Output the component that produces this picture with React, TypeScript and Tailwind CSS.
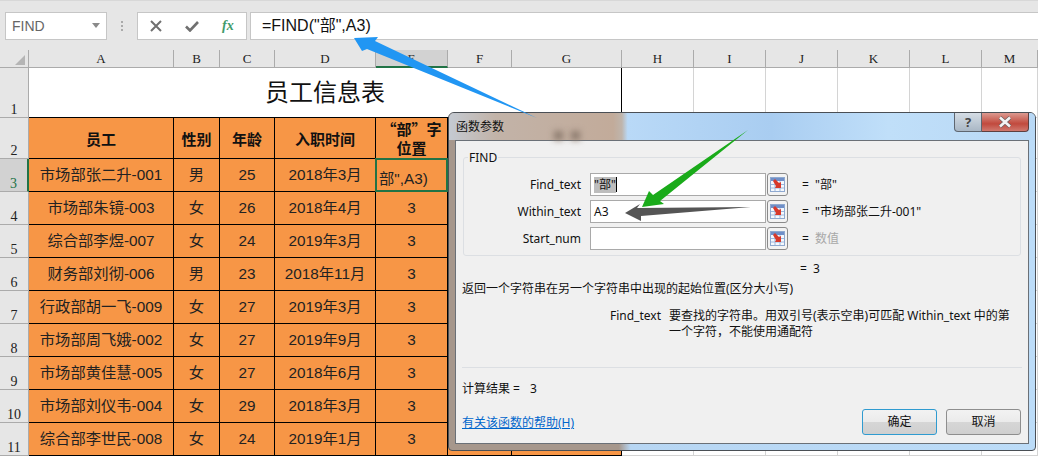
import React from "react";

const SANS = { fontFamily: '"Liberation Sans","Noto Sans CJK SC",sans-serif' };
const CJK = { fontFamily: '"Noto Sans CJK SC","Liberation Sans",sans-serif' };
const UI = { fontFamily: '"Noto Sans","Noto Sans CJK SC",sans-serif' };
const SERIF = { fontFamily: '"Liberation Serif","Noto Sans CJK SC",serif' };

const rows: [string, string, string, string][] = [
  ["市场部朱镜-003", "女", "26", "2018年4月"],
  ["综合部李煜-007", "女", "24", "2019年3月"],
  ["财务部刘彻-006", "男", "23", "2018年11月"],
  ["行政部胡一飞-009", "女", "27", "2019年3月"],
  ["市场部周飞娥-002", "女", "27", "2019年9月"],
  ["市场部黄佳慧-005", "女", "27", "2018年6月"],
  ["市场部刘仪韦-004", "女", "29", "2018年3月"],
  ["综合部李世民-008", "女", "24", "2019年1月"],
];

function ColHead({ label, active }: { label: string; active?: boolean }) {
  return (
    <div
      className={
        active
          ? "flex items-center justify-center border-b-2 border-b-[#217346] border-r border-r-[#ababab] bg-[#d2d2d2] text-[13px] leading-none text-[#333]"
          : "flex items-center justify-center border-b border-b-[#ababab] border-r border-r-[#ababab] bg-[#e6e6e6] text-[13px] leading-none text-[#222]"
      }
      style={SERIF}
    >
      {label}
    </div>
  );
}

function RowHead({ n, active }: { n: number; active?: boolean }) {
  return (
    <div
      className={
        active
          ? "flex items-end justify-center border-b border-b-[#ababab] border-r-2 border-r-[#217346] bg-[#d2d2d2] text-[14px] leading-[15px] text-[#217346]"
          : "flex items-end justify-center border-b border-b-[#ababab] border-r border-r-[#ababab] bg-[#e6e6e6] text-[14px] leading-[15px] text-[#222]"
      }
      style={SERIF}
    >
      {n}
    </div>
  );
}

function Cell({ children }: { children?: React.ReactNode }) {
  return (
    <div className="flex items-center justify-center border-b border-r border-black bg-[#f79646] text-[15.3px] text-[#222]" style={SANS}>
      {children}
    </div>
  );
}

function HeadCell({ children }: { children?: React.ReactNode }) {
  return (
    <div className="flex items-center justify-center border-b border-r border-black bg-[#f79646] text-center text-[15px] font-bold leading-[19px] text-[#111]" style={CJK}>
      <div>{children}</div>
    </div>
  );
}

function Blank() {
  return <div className="border-b border-r border-[#d4d4d4] bg-white" />;
}

function RefIcon() {
  return (
    <div className="flex h-[23px] w-[21px] shrink-0 items-center justify-center rounded-[3px] border border-[#8a8a8a] bg-[#f3f3f3]">
      <svg width="15" height="15" viewBox="0 0 15 15">
        <rect x="0.5" y="0.5" width="14" height="14" fill="#f4f8fd" stroke="#8fa9d0" />
        <rect x="1" y="1" width="13" height="3" fill="#6f8fc8" />
        <path d="M1 7.5H14M1 11H14M5 4V14M10 4V14" stroke="#9db8dd" fill="none" />
        <polygon points="3,4 5,2 9,6 11,5 11,11 5,11 6,9" fill="#d8392b" />
      </svg>
    </div>
  );
}

function ArgRow({ label, children, value, muted }: { label: string; children?: React.ReactNode; value: string; muted?: boolean }) {
  return (
    <div className="flex h-[23px] items-center">
      <div className="w-[117px] shrink-0 text-right">{label}</div>
      <div className="ml-[9px] flex h-[23px] w-[176px] shrink-0 items-center border border-[#a9a9a9] bg-white pl-[3px]">{children}</div>
      <div className="ml-px"><RefIcon /></div>
      <div className="ml-[14px] w-[13px] shrink-0">=</div>
      <div className={muted ? "text-[#a8a8a8]" : ""}>{value}</div>
    </div>
  );
}

function Dialog() {
  return (
    <div
      className="absolute left-[448px] top-[112px] h-[339px] w-[588px] rounded-t-[6px] rounded-b-[4px] border border-[#4a4f55] bg-[linear-gradient(90deg,#a6978c_0%,#a6978c_29%,#b7d6f3_31%,#bcdcf8_100%)] text-[12px] leading-[16px] text-[#111]"
      style={UI}
    >
      <div className="relative h-[27px] rounded-t-[5px] bg-[linear-gradient(90deg,#c4cad2_0%,#c2b3a8_8%,#c2ab9a_28%,#bfb5ac_29.5%,#b9d9f7_30.5%,#a9cdf1_55%,#c0dff9_75%,#b8d8f5_100%)]">
        <div className="absolute left-[7px] top-[6px] text-[12px] leading-[16px]">函数参数</div>
        <div className="absolute left-[105px] top-[18px] h-[9px] w-[9px] bg-[#8c7b6e] blur-[3px]" />
        <div className="absolute left-[122px] top-[18px] h-[9px] w-[9px] bg-[#8c7b6e] blur-[3px]" />
        <div className="absolute left-[505px] top-0 flex h-[19px]">
          <div className="flex w-[28px] items-center justify-center rounded-bl-[4px] border border-t-0 border-[#5e6670] bg-[linear-gradient(180deg,#d5dde5,#a9b7c5)] text-[13px] font-bold leading-none text-[#444]">?</div>
          <div className="flex w-[47px] items-center justify-center rounded-br-[4px] border border-l-0 border-t-0 border-[#5e3f3f] bg-[linear-gradient(180deg,#dc9a90,#c6564a_50%,#c14a3e_60%,#d0796e)]">
            <svg width="16" height="12" viewBox="0 0 16 12"><path d="M3 1.5L13 10.5M13 1.5L3 10.5" stroke="#6b5f5f" strokeWidth="4" /><path d="M3 1.5L13 10.5M13 1.5L3 10.5" stroke="#f4f4f4" strokeWidth="2.6" /></svg>
          </div>
        </div>
      </div>
      <div className="mx-[6px] h-[304px] border border-[#6a7077] bg-[#f0f0f0] pl-[6px] pr-2 pt-4">
        <div className="relative ml-px w-[558px] rounded-[3px] border border-[#dcdfe3] pb-[5px] pt-[15px]">
          <div className="absolute left-[4px] top-[-8px] bg-[#f0f0f0] px-px">FIND</div>
          <div className="flex flex-col gap-[4px]">
            <ArgRow label="Find_text" value={'"部"'}>
              <span className="bg-[#bdbdbd]">"部"</span>
              <span className="h-[15px] w-px bg-black" />
            </ArgRow>
            <ArgRow label="Within_text" value={'"市场部张二升-001"'}>A3</ArgRow>
            <ArgRow label="Start_num" value="数值" muted />
          </div>
        </div>
        <div className="ml-[338px] mt-[5px] flex h-4">
          <div className="w-[13px]">=</div>
          <div>3</div>
        </div>
        <div className="mt-[4px]">返回一个字符串在另一个字符串中出现的起始位置(区分大小写)</div>
        <div className="mt-[11px] flex">
          <div className="ml-[148px] w-[59px] shrink-0">Find_text</div>
          <div className="w-[346px]">
            要查找的字符串。用双引号(表示空串)可匹配 Within_text 中的第一个字符，不能使用通配符
          </div>
        </div>
        <div className="mt-[27px] h-px w-[560px] bg-[#dcdfe3]" />
        <div className="mt-[13px] flex">
          <span>计算结果 =</span>
          <span className="ml-[10px]">3</span>
        </div>
        <div className="mr-[-1px] mt-[12px] flex items-start justify-between">
          <a className="mt-[6px] text-[#0066cc] underline">有关该函数的帮助(H)</a>
          <div className="flex gap-[9px]">
            <div className="flex h-[26px] w-[75px] items-center justify-center rounded-[3px] border border-[#2f9bd0] bg-[linear-gradient(180deg,#f2f2f2_0%,#ebebeb_48%,#d6d6d6_52%,#cfcfcf_100%)]">确定</div>
            <div className="flex h-[26px] w-[75px] items-center justify-center rounded-[3px] border border-[#8e8e8e] bg-[linear-gradient(180deg,#f2f2f2_0%,#ebebeb_48%,#d6d6d6_52%,#cfcfcf_100%)]">取消</div>
          </div>
        </div>
      </div>
    </div>
  );
}

export default function App() {
  return (
    <div className="relative h-[456px] w-[1038px] overflow-hidden bg-[#e6e6e6]">
      {/* formula bar */}
      <div className="h-[50px] border-t border-[#d8d8d8] bg-[#e6e6e6] pl-[5px] pt-[11px]">
        <div className="flex h-[28px] items-stretch">
          <div className="flex w-[102px] items-center justify-between border border-[#c6c6c6] bg-white pl-[6px] pr-[5px] text-[14px] text-[#666]" style={SANS}>
            FIND
            <svg width="10" height="6" viewBox="0 0 10 6"><path d="M1 0H9L5 5Z" fill="#8a8a8a" /></svg>
          </div>
          <div className="flex w-[30px] flex-col items-center justify-center gap-[2px]">
            <span className="h-[2px] w-[2px] bg-[#aaa]" />
            <span className="h-[2px] w-[2px] bg-[#aaa]" />
            <span className="h-[2px] w-[2px] bg-[#aaa]" />
          </div>
          <div className="flex w-[110px] items-center border border-[#c6c6c6] bg-white">
            <svg className="ml-[12px]" width="12" height="12" viewBox="0 0 12 12"><path d="M1 1L11 11M11 1L1 11" stroke="#707070" strokeWidth="2" /></svg>
            <svg className="ml-[23px]" width="14" height="12" viewBox="0 0 14 12"><path d="M1 6.5L5 10.5L13 2" stroke="#707070" strokeWidth="2.6" fill="none" /></svg>
            <span className="ml-[23px] text-[14px] font-bold italic leading-none text-[#3f9b6b]" style={SERIF}>fx</span>
          </div>
          <div className="ml-[3px] flex flex-1 items-center border border-r-0 border-[#c6c6c6] bg-white pl-[11px] text-[16px] text-[#111]" style={SANS}>
            =FIND("部",A3)
          </div>
        </div>
      </div>

      {/* sheet */}
      <div className="grid grid-cols-[29px_145px_46px_55px_101px_72px_64px_110px_72px_72px_72px_72px_72px_56px] grid-rows-[18px_50px_41px_33px_33px_33px_33px_33px_33px_33px_33px_33px]">
        <div className="relative border-b border-r border-[#ababab] bg-[#e6e6e6]">
          <svg className="absolute left-[15px] top-[5px]" width="11" height="11" viewBox="0 0 11 11"><path d="M10 0V10H0Z" fill="#b5b5b5" /></svg>
        </div>
        {["A", "B", "C", "D"].map((c) => <ColHead key={c} label={c} />)}
        <ColHead label="E" active />
        {["F", "G", "H", "I", "J", "K", "L", "M"].map((c) => <ColHead key={c} label={c} />)}

        <RowHead n={1} />
        <div className="col-span-7 flex items-center justify-center border-b border-r border-b-black border-r-black bg-white text-[24px] text-[#111]" style={SANS}>员工信息表</div>
        {[0, 1, 2, 3, 4, 5].map((i) => <Blank key={i} />)}

        <RowHead n={2} />
        <HeadCell>员工</HeadCell>
        <HeadCell>性别</HeadCell>
        <HeadCell>年龄</HeadCell>
        <HeadCell>入职时间</HeadCell>
        <HeadCell>“部”字<br />位置</HeadCell>
        <Cell />
        <Cell />
        {[0, 1, 2, 3, 4, 5].map((i) => <Blank key={i} />)}

        <RowHead n={3} active />
        <Cell>市场部张二升-001</Cell>
        <Cell>男</Cell>
        <Cell>25</Cell>
        <Cell>2018年3月</Cell>
        <div className="relative -ml-px -mt-px flex items-end overflow-hidden border-2 border-[#217346] bg-[#f79646] pb-px pl-[2px] text-[15.3px] leading-[20px] text-[#222]" style={SANS}>
          部",A3)
        </div>
        <Cell />
        <Cell />
        {[0, 1, 2, 3, 4, 5].map((i) => <Blank key={i} />)}

        {rows.map((r, i) => (
          <React.Fragment key={r[0]}>
            <RowHead n={i + 4} />
            <Cell>{r[0]}</Cell>
            <Cell>{r[1]}</Cell>
            <Cell>{r[2]}</Cell>
            <Cell>{r[3]}</Cell>
            <Cell>3</Cell>
            <Cell />
            <Cell />
            {[0, 1, 2, 3, 4, 5].map((j) => <Blank key={j} />)}
          </React.Fragment>
        ))}
      </div>

      <Dialog />

      {/* annotation arrows */}
      <svg className="pointer-events-none absolute left-0 top-0" width="1038" height="456" viewBox="0 0 1038 456">
        <polygon points="354,38 378,37 375,41 537,118 367,49 362,51" fill="#2196f3" />
        <polygon points="642,207 649,191 653,195 748,130 660,201 664,204" fill="#1aab1a" />
        <polygon points="625,213 640,204 637,208 751,207 641,216 641,221" fill="#555555" />
      </svg>
    </div>
  );
}
